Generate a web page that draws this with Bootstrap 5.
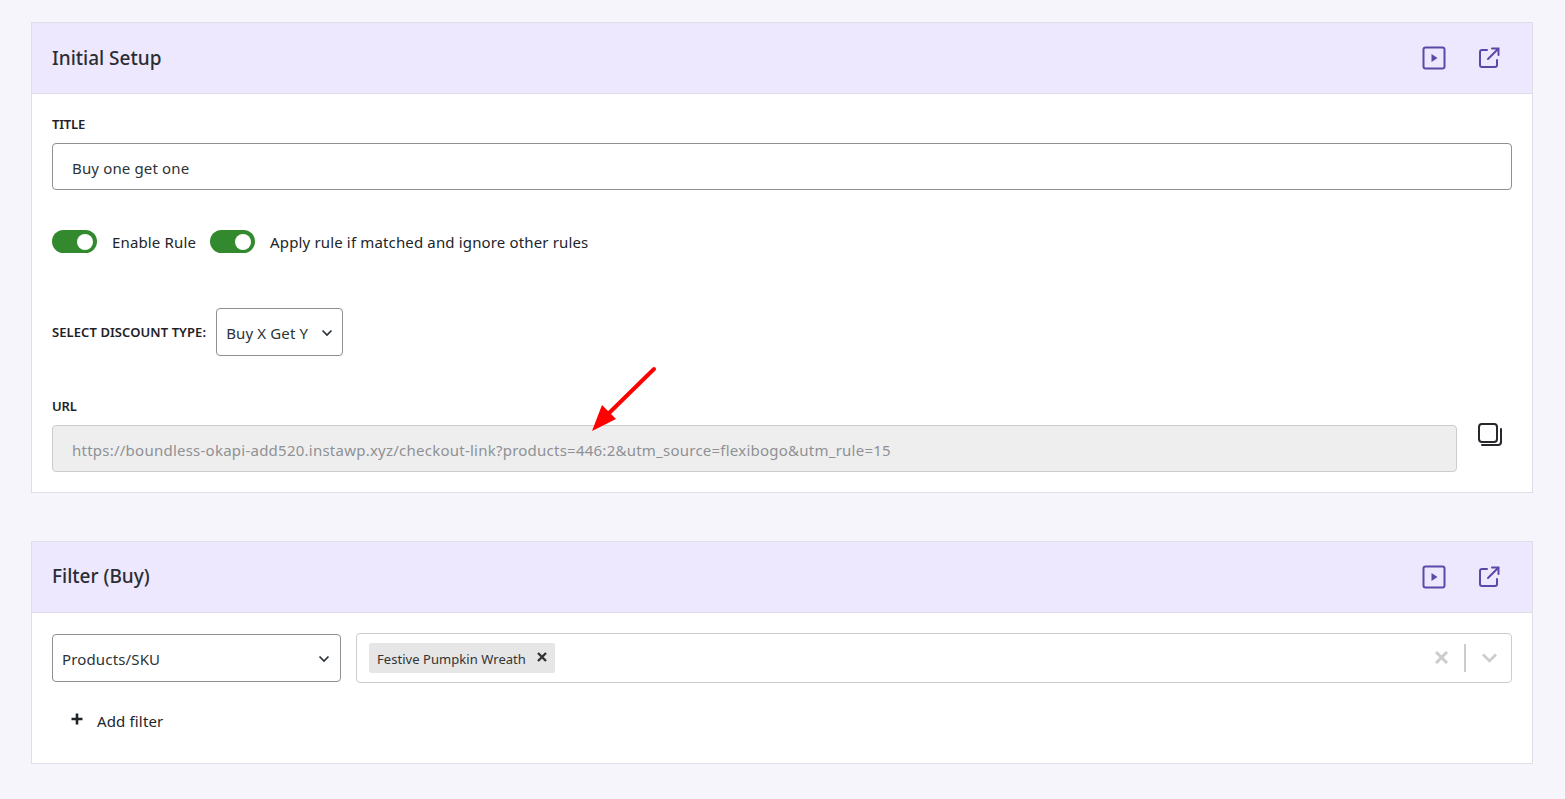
<!DOCTYPE html>
<html lang="en">
<head>
<meta charset="utf-8">
<title>Initial Setup</title>
<link href="https://cdn.jsdelivr.net/npm/bootstrap@5.3.0/dist/css/bootstrap.min.css" rel="stylesheet">
<style>
html,body{height:799px;overflow:hidden}
body{background:#f5f5fb;color:#212529;font-family:"Noto Sans",sans-serif;font-size:15px;letter-spacing:.15px;padding:22px 32px 0 31px;position:relative}
.pane{background:#fff;border:1px solid #dedfe8}
.pane + .pane{margin-top:48px}
.pane-head{background:#ede8fe;border-bottom:1px solid #dedce9;height:71px;padding:0 20px}
.pane-head h2{font-size:19px;font-weight:500;letter-spacing:0;margin:0;color:#2b2d33;font-family:"Noto Sans",sans-serif}
.head-icons{gap:31px;padding-right:11px;color:#5d48a8}
.pane-body{padding:0 20px}
.fld-label{font-size:13px;font-weight:600;letter-spacing:-.2px;color:#1f2126;line-height:18px;margin:0}
.title-label{padding-top:21px}
.type-label{letter-spacing:.08px}
.url-label{margin-top:41px}
.fld-input{height:47px;border:1px solid #8c8f94;border-radius:4px;padding:3px 19px 0;font-size:15px;color:#2c3338;width:100%;background:#fff;display:flex;align-items:center;margin-top:10px}
.fld-input.locked{background:#eee;border-color:#ccc;color:#8f9194;width:1405px;margin-top:0;padding-top:5px;letter-spacing:.24px}
.toggle-row{margin-top:40px}
.tgl{width:45px;height:23px;border-radius:12px;background:#338a2e;position:relative;flex:none;display:block}
.tgl::after{content:"";position:absolute;right:4px;top:3.5px;width:16px;height:16px;border-radius:50%;background:#fff}
.tgl-text{margin-left:15px;padding-top:1px}
.tgl-next{margin-left:14px}
.type-row{margin-top:54px}
.url-row{margin-top:10px;padding-bottom:20px}
.copy-ico{margin:-3px 0 0 20px;flex:none}
.pick{border:1px solid #8c8f94;border-radius:4px;height:48px;display:flex;align-items:center;justify-content:space-between;background:#fff;color:#2c3338;font-size:15px}
.pick svg{margin-top:-2px}
.pick-type{width:127px;margin-left:10px;padding:4px 9px 0}
.pick-filter{width:289px;padding:4px 10px 0 9px}
.filter-row{margin-top:20px;gap:15px}
.tag-box{border:1px solid #ccc;border-radius:4px;height:50px;flex:1;padding:0 14px 0 12px;background:#fff}
.tag-item{background:#e6e6e6;border-radius:2px;height:30px;font-size:13px;color:#333;padding:4px 8px 0;gap:11px;letter-spacing:.05px}
.tag-item svg{margin-top:-6px}
.box-tools{gap:16px}
.arrow-note{position:absolute;left:585px;top:361px}
.sep{width:2px;height:28px;background:#ccc}
.add-row{margin:25px 0 31px 19px;gap:14px}
.add-row svg{margin-top:-2px}
.add-text{padding-top:2px}
</style>
</head>
<body>
<section class="pane">
  <div class="pane-head d-flex align-items-center justify-content-between">
    <h2>Initial Setup</h2>
    <div class="head-icons d-flex align-items-center">
      <svg width="24" height="24" viewBox="0 0 24 24" fill="none" stroke="currentColor" stroke-width="2"><rect x="1.500" y="1.500" width="21" height="21" rx="2"/><path d="M9.500 8v8l6-4z" fill="currentColor" stroke="none"/></svg>
      <svg width="24" height="24" viewBox="0 0 24 24" fill="none" stroke="currentColor" stroke-width="2" stroke-linecap="round"><path d="M10 4H5a2 2 0 0 0-2 2v13a2 2 0 0 0 2 2h13a2 2 0 0 0 2-2v-5"/><path d="M15 2.500h6.500V9M21 3 11 13"/></svg>
    </div>
  </div>
  <div class="pane-body">
    <p class="fld-label title-label">TITLE</p>
    <div class="fld-input">Buy one get one</div>
    <div class="toggle-row d-flex align-items-center">
      <span class="tgl"></span><span class="tgl-text">Enable Rule</span>
      <span class="tgl tgl-next"></span><span class="tgl-text">Apply rule if matched and ignore other rules</span>
    </div>
    <div class="type-row d-flex align-items-center">
      <span class="fld-label type-label">SELECT DISCOUNT TYPE:</span>
      <div class="pick pick-type">Buy X Get Y
        <svg width="12" height="8" viewBox="0 0 12 8" fill="none" stroke="#2c3338" stroke-width="1.700"><path d="M1.500 1.500 6 6l4.500-4.500"/></svg>
      </div>
    </div>
    <p class="fld-label url-label">URL</p>
    <div class="url-row d-flex">
      <div class="fld-input locked">https://boundless-okapi-add520.instawp.xyz/checkout-link?products=446:2&amp;utm_source=flexibogo&amp;utm_rule=15</div>
      <svg class="copy-ico" width="26" height="26" viewBox="0 0 26 26" fill="none" stroke="#26282c" stroke-width="2"><rect x="2" y="2" width="18" height="18" rx="3"/><path d="M24 7v13a3 3 0 0 1-3 3H5" stroke-linecap="round"/></svg>
    </div>
  </div>
</section>
<section class="pane">
  <div class="pane-head d-flex align-items-center justify-content-between">
    <h2>Filter (Buy)</h2>
    <div class="head-icons d-flex align-items-center">
      <svg width="24" height="24" viewBox="0 0 24 24" fill="none" stroke="currentColor" stroke-width="2"><rect x="1.500" y="1.500" width="21" height="21" rx="2"/><path d="M9.500 8v8l6-4z" fill="currentColor" stroke="none"/></svg>
      <svg width="24" height="24" viewBox="0 0 24 24" fill="none" stroke="currentColor" stroke-width="2" stroke-linecap="round"><path d="M10 4H5a2 2 0 0 0-2 2v13a2 2 0 0 0 2 2h13a2 2 0 0 0 2-2v-5"/><path d="M15 2.500h6.500V9M21 3 11 13"/></svg>
    </div>
  </div>
  <div class="pane-body">
    <div class="filter-row d-flex align-items-center">
      <div class="pick pick-filter">Products/SKU
        <svg width="12" height="8" viewBox="0 0 12 8" fill="none" stroke="#2c3338" stroke-width="1.700"><path d="M1.500 1.500 6 6l4.500-4.500"/></svg>
      </div>
      <div class="tag-box d-flex align-items-center justify-content-between">
        <div class="tag-item d-flex align-items-center">Festive Pumpkin Wreath
          <svg width="10" height="10" viewBox="0 0 10 10" stroke="#333" stroke-width="2.400"><path d="M1 1l8 8M9 1l-8 8"/></svg>
        </div>
        <div class="box-tools d-flex align-items-center">
          <svg width="13" height="13" viewBox="0 0 13 13" stroke="#ccc" stroke-width="3"><path d="M1 1l11 11M12 1 1 12"/></svg>
          <span class="sep"></span>
          <svg width="15" height="10" viewBox="0 0 15 10" fill="none" stroke="#ccc" stroke-width="2.600"><path d="M1 1.500l6.500 6.500L14 1.500"/></svg>
        </div>
      </div>
    </div>
    <div class="add-row d-flex align-items-center">
      <svg width="12" height="12" viewBox="0 0 12 12" stroke="#1d2327" stroke-width="2.600"><path d="M6 .5v11M.5 6h11"/></svg>
      <span class="add-text">Add filter</span>
    </div>
  </div>
</section>
<svg class="arrow-note" width="75" height="75" viewBox="0 0 75 75"><path d="M69 8 20 56" stroke="#f00" stroke-width="4" stroke-linecap="round"/><path d="M7 70 17 44l14 14z" fill="#f00"/></svg>
<script src="https://cdn.jsdelivr.net/npm/bootstrap@5.3.0/dist/js/bootstrap.bundle.min.js"></script>
</body>
</html>
